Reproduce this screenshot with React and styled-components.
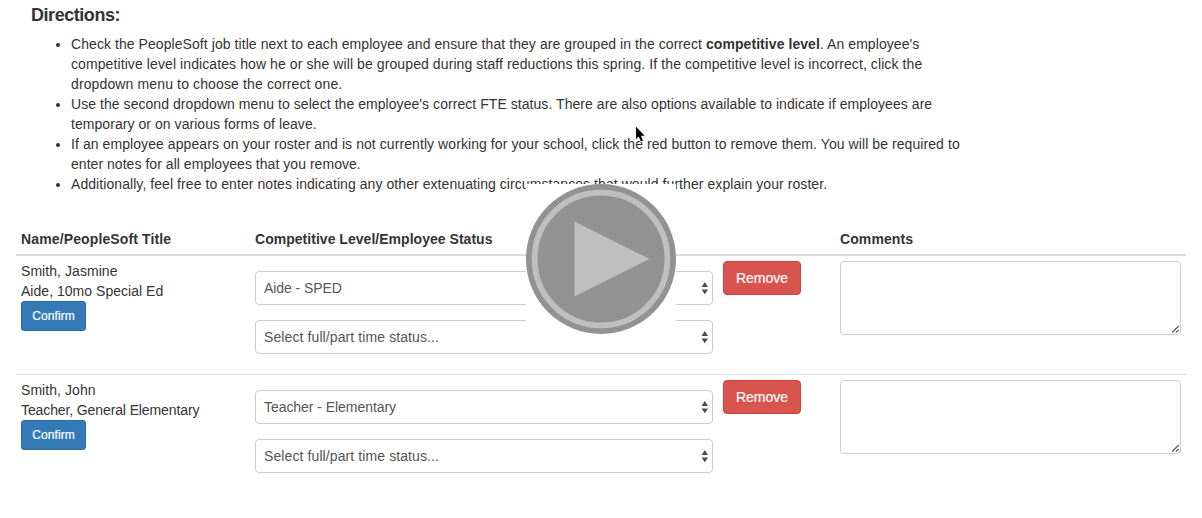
import React from "react";
import styled, { createGlobalStyle } from "styled-components";

const GlobalStyle = createGlobalStyle`
  *, *::before, *::after { box-sizing: border-box; }
  html, body { margin: 0; background: #fff; overflow: hidden; }
  body {
    font-family: "Liberation Sans", Arial, Helvetica, sans-serif;
    font-size: 14px;
    line-height: 20px;
    color: #333;
  }
`;

const Page = styled.main`
  position: relative;
  width: 1202px;
  height: 518px;
  padding: 5px 16px 0;
  overflow: hidden;
`;

const Directions = styled.section`
  padding-left: 15px;
  height: 219px;
`;

const Title = styled.h4`
  margin: 0 0 9px;
  font-size: 18px;
  line-height: 20px;
  font-weight: 700;
  letter-spacing: -0.45px;
`;

const List = styled.ul`
  margin: 0;
  padding-left: 40px;
`;

const Line = styled.span`
  display: block;
  white-space: nowrap;
  letter-spacing: ${(p) => p.$track || 0}px;
`;

const Grid = styled.div`
  display: grid;
  grid-template-columns: 234px 468px 117px 351px;
`;

const HeadRow = styled(Grid)`
  height: 32px;
  border-bottom: 2px solid #ddd;
  font-weight: 700;
`;

const Row = styled(Grid)`
  height: ${(p) => (p.$divided ? 119 : 118)}px;
  border-top: ${(p) => (p.$divided ? "1px solid #ddd" : "0")};
`;

const Cell = styled.div`
  padding: 5px;
`;

const Button = styled.button`
  display: block;
  margin: 0;
  font-family: inherit;
  color: #fff;
  white-space: nowrap;
  text-align: center;
  padding: 0;
  -webkit-text-stroke: 0.2px #fff;
`;

const ConfirmButton = styled(Button)`
  width: 65px;
  height: 30px;
  font-size: 12px;
  line-height: 18px;
  letter-spacing: 0.1px;
  background: #337ab7;
  border: 1px solid #2e6da4;
  border-radius: 3px;
`;

const RemoveButton = styled(Button)`
  width: 78px;
  height: 34px;
  font-size: 14px;
  line-height: 20px;
  background: #d9534f;
  border: 1px solid #d43f3a;
  border-radius: 4px;
`;

const Selects = styled.div`
  display: flex;
  flex-direction: column;
  gap: 15px;
  padding-top: 10px;
`;

const SelectBox = styled.div`
  display: flex;
  align-items: center;
  justify-content: space-between;
  height: 34px;
  padding: 0 4px 0 8px;
  color: #555;
  border: 1px solid #ccc;
  border-radius: 4px;
`;

const NoteBox = styled.div`
  display: flex;
  align-items: flex-end;
  justify-content: flex-end;
  height: 74px;
  border: 1px solid #ccc;
  border-radius: 4px;
`;

const PlayOverlay = styled.div`
  position: absolute;
  left: 526px;
  top: 184px;
  width: 150px;
  height: 150px;
  background: #fff;
`;

const Pointer = styled.svg`
  position: absolute;
  left: 634px;
  top: 125px;
`;

const directions = [
  [
    [<>Check the PeopleSoft job title next to each employee and ensure that they are grouped in the correct <b>competitive level</b>. An employee's</>, 0.068],
    ["competitive level indicates how he or she will be grouped during staff reductions this spring. If the competitive level is incorrect, click the", 0.094],
    ["dropdown menu to choose the correct one.", 0.13],
  ],
  [
    ["Use the second dropdown menu to select the employee's correct FTE status. There are also options available to indicate if employees are", 0.055],
    ["temporary or on various forms of leave.", 0.055],
  ],
  [
    ["If an employee appears on your roster and is not currently working for your school, click the red button to remove them. You will be required to", 0.076],
    ["enter notes for all employees that you remove.", 0.04],
  ],
  [["Additionally, feel free to enter notes indicating any other extenuating circumstances that would further explain your roster.", 0.068]],
];

const employees = [
  { name: "Smith, Jasmine", title: "Aide, 10mo Special Ed", titleTrack: 0.03, level: "Aide - SPED", levelTrack: -0.07 },
  { name: "Smith, John", title: "Teacher, General Elementary", titleTrack: -0.11, level: "Teacher - Elementary", levelTrack: -0.05 },
];

function Select({ track, children }) {
  return (
    <SelectBox>
      <Line $track={track}>{children}</Line>
      <svg width="7" height="14" viewBox="0 0 7 14" fill="#4a4a4a">
        <path d="M3.8 1 L7 5.9 H0.6Z M0.6 8.4 H7 L3.8 13.2Z" />
      </svg>
    </SelectBox>
  );
}

export default function App() {
  return (
    <Page>
      <GlobalStyle />
      <Directions>
        <Title>Directions:</Title>
        <List>
          {directions.map((lines, i) => (
            <li key={i}>
              {lines.map(([text, track], j) => (
                <Line key={j} $track={track}>{text}</Line>
              ))}
            </li>
          ))}
        </List>
      </Directions>
      <HeadRow>
        <Cell><Line $track={0.13}>Name/PeopleSoft Title</Line></Cell>
        <Cell><Line $track={0.03}>Competitive Level/Employee Status</Line></Cell>
        <Cell />
        <Cell><Line $track={0.1}>Comments</Line></Cell>
      </HeadRow>
      {employees.map((e, i) => (
        <Row key={e.name} $divided={i > 0}>
          <Cell>
            <Line $track={0.06}>{e.name}</Line>
            <Line $track={e.titleTrack}>{e.title}</Line>
            <ConfirmButton>Confirm</ConfirmButton>
          </Cell>
          <Cell>
            <Selects>
              <Select track={e.levelTrack}>{e.level}</Select>
              <Select track={0.1}>Select full/part time status...</Select>
            </Selects>
          </Cell>
          <Cell><RemoveButton>Remove</RemoveButton></Cell>
          <Cell>
            <NoteBox>
              <svg width="10" height="10" viewBox="0 0 10 10" stroke="#555" strokeWidth="1.1">
                <path d="M2.2 8.5 L8.7 2 M6 8.5 L8.7 5.8" />
              </svg>
            </NoteBox>
          </Cell>
        </Row>
      ))}
      <Pointer width="14" height="19" viewBox="0 0 14 19">
        <path
          d="M2 1.8 V14 L4.7 11.5 L6.8 16.4 L9 15.4 L7 10.8 H10.7Z"
          fill="#000"
          stroke="#fff"
          strokeWidth="1.6"
          paintOrder="stroke"
        />
      </Pointer>
      <PlayOverlay>
        <svg width="150" height="150" viewBox="0 0 150 150">
          <circle cx="75" cy="75" r="75" fill="#929292" />
          <circle cx="75" cy="75" r="66.4" fill="none" stroke="#bfbfbf" strokeWidth="5.8" />
          <path d="M48.5 37.5 L123.5 75 L48.5 112.5Z" fill="#bfbfbf" />
        </svg>
      </PlayOverlay>
    </Page>
  );
}
